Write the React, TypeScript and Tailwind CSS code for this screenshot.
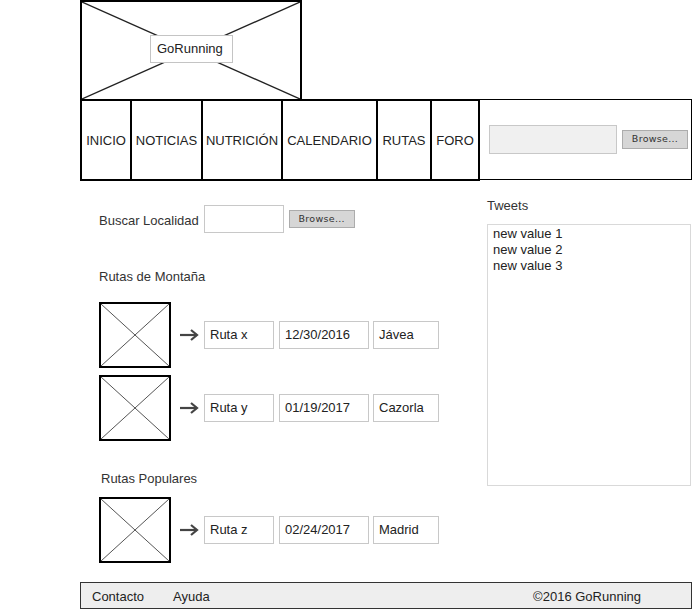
const font = "font-['Liberation_Sans',Arial,sans-serif]";

function Cross({ stroke = "#555", width = 1 }: { stroke?: string; width?: number }) {
  return (
    <svg className="absolute inset-0 h-full w-full" preserveAspectRatio="none" viewBox="0 0 100 100">
      <line x1="0" y1="0" x2="100" y2="100" stroke={stroke} strokeWidth={width} vectorEffect="non-scaling-stroke" />
      <line x1="100" y1="0" x2="0" y2="100" stroke={stroke} strokeWidth={width} vectorEffect="non-scaling-stroke" />
    </svg>
  );
}

function Arrow() {
  return (
    <svg width="20" height="12" viewBox="0 0 20 12" className="shrink-0">
      <path d="M1 6 H18" stroke="#444" strokeWidth="2.2" />
      <path d="M12 1 L18 6 L12 11" stroke="#444" strokeWidth="2.2" fill="none" />
    </svg>
  );
}

function BrowseButton({ className = "" }: { className?: string }) {
  return (
    <button
      className={`flex items-center justify-center bg-[#d6d6d6] border border-[#acacac] text-[9.5px] text-[#333] font-['DejaVu_Sans',sans-serif] tracking-[0.3px] ${className}`}
    >
      Browse...
    </button>
  );
}

function Field({ text, w }: { text: string; w: string }) {
  return (
    <div className={`h-[28px] ${w} border border-[#c8c8c8] bg-white pl-[5px] flex items-center text-[13px] text-[#222]`}>
      {text}
    </div>
  );
}

function RouteRow({ name, date, place }: { name: string; date: string; place: string }) {
  return (
    <div className="flex items-center">
      <div className="relative w-[72px] h-[66px] border-2 border-black bg-white">
        <Cross />
      </div>
      <div className="ml-[8px] mr-[5px]">
        <Arrow />
      </div>
      <div className="flex">
        <Field text={name} w="w-[70px]" />
        <div className="ml-[5px]">
          <Field text={date} w="w-[90px]" />
        </div>
        <div className="ml-[4px]">
          <Field text={place} w="w-[66px]" />
        </div>
      </div>
    </div>
  );
}

const tabs = [
  { label: "INICIO", w: "w-[52px]" },
  { label: "NOTICIAS", w: "w-[71px]" },
  { label: "NUTRICIÓN", w: "w-[80px]" },
  { label: "CALENDARIO", w: "w-[95px]" },
  { label: "RUTAS", w: "w-[54px]" },
  { label: "FORO", w: "w-[48px]" },
];

export default function App() {
  return (
    <div className={`w-[699px] h-[610px] bg-white overflow-hidden ${font}`}>
      <div className="ml-[80px] w-[612px]">
        {/* Logo */}
        <div className="relative w-[222px] h-[99px] border-2 border-b-0 border-black">
          <Cross stroke="#222" width={1.3} />
          <div className="relative ml-[68px] mt-[33px] w-[83px] h-[28px] border border-[#c4c4c4] bg-white flex items-center pl-[6px] text-[13px] text-[#222]">
            GoRunning
          </div>
        </div>

        {/* Nav */}
        <div className="flex h-[82px]">
          {tabs.map((t, i) => (
            <div
              key={t.label}
              className={`${t.w} h-full border-2 border-black ${i > 0 ? "border-l-0" : ""} flex items-center justify-center pt-[1px] text-[13px] text-[#222]`}
            >
              {t.label}
            </div>
          ))}
          <div className="w-[212px] h-[81px] border border-l-0 border-black flex items-center pl-[9px] gap-[5px]">
            <div className="w-[128px] h-[29px] bg-[#f0f0f0] border border-[#c8c8c8]" />
            <BrowseButton className="w-[66px] h-[19px]" />
          </div>
        </div>

        {/* Main */}
        <div className="flex">
          <div className="w-[407px] pl-[19px]">
            <div className="mt-[24px] flex items-center">
              <span className="pt-[4px] text-[13px] text-[#333]">Buscar Localidad</span>
              <div className="ml-[5px] w-[80px] h-[28px] border border-[#c8c8c8] bg-white" />
              <BrowseButton className="ml-[5px] w-[66px] h-[18px]" />
            </div>

            <div className="mt-[36px] text-[13px] leading-[16px] text-[#333]">Rutas de Montaña</div>

            <div className="mt-[17px] flex flex-col gap-[7px]">
              <RouteRow name="Ruta x" date="12/30/2016" place="Jávea" />
              <RouteRow name="Ruta y" date="01/19/2017" place="Cazorla" />
            </div>

            <div className="mt-[30px] ml-[2px] text-[13px] leading-[16px] text-[#333]">Rutas Populares</div>

            <div className="mt-[10px]">
              <RouteRow name="Ruta z" date="02/24/2017" place="Madrid" />
            </div>
          </div>

          <div className="w-[204px]">
            <div className="mt-[17px] text-[13px] leading-[16px] text-[#333]">Tweets</div>
            <div className="mt-[10px] h-[262px] border border-[#d9d9d9] bg-white pl-[5px] pt-[1px] text-[13px] leading-[16px] text-[#222]">
              <div>new value 1</div>
              <div>new value 2</div>
              <div>new value 3</div>
            </div>
          </div>
        </div>

        {/* Footer */}
        <div className="mt-[19px] h-[27px] border border-[#333] bg-[#eeeeee] flex items-center pt-[2px] text-[13px] text-[#222]">
          <span className="ml-[11px]">Contacto</span>
          <span className="ml-[29px]">Ayuda</span>
          <span className="ml-auto mr-[50px]">©2016 GoRunning</span>
        </div>
      </div>
    </div>
  );
}
